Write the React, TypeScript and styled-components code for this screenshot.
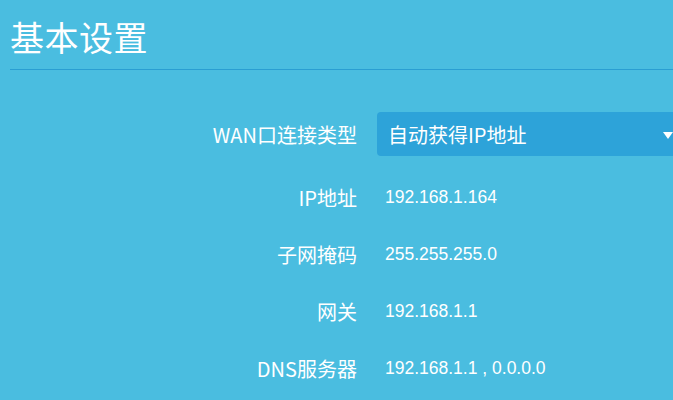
import React from 'react';
import styled, { createGlobalStyle } from 'styled-components';

const GlobalStyle = createGlobalStyle`
  html, body {
    margin: 0;
    padding: 0;
    background: #4abde0;
    overflow: hidden;
  }
  body {
    font-family: "Microsoft YaHei", "Noto Sans CJK SC", "Noto Sans", sans-serif;
    color: #fff;
  }
`;

const Page = styled.div`
  width: 683px;
  height: 400px;
  background: #4abde0;
  padding-left: 10px;
  box-sizing: border-box;
`;

const Header = styled.div`
  height: 70px;
  box-sizing: border-box;
  padding-top: 16px;
  border-bottom: 1px solid #2a9ed2;
`;

const Title = styled.h1`
  margin: 0;
  font-size: 34px;
  line-height: 42px;
  font-weight: normal;
  letter-spacing: 0.5px;
`;

const Form = styled.div`
  padding-top: 35px;
  display: flex;
  flex-direction: column;
`;

const Row = styled.div<{ $first?: boolean }>`
  display: flex;
  align-items: center;
  height: ${p => (p.$first ? '58px' : '57px')};
  margin-bottom: ${p => (p.$first ? '6px' : '0')};
`;

const Label = styled.div`
  width: 367px;
  flex-shrink: 0;
  text-align: right;
  font-size: 20px;
  padding-right: 20px;
  box-sizing: border-box;
  white-space: nowrap;
`;

const Value = styled.div`
  padding-left: 8px;
  font-family: "Liberation Sans", Arial, sans-serif;
  font-size: 17.5px;
  white-space: nowrap;
`;

const Select = styled.div`
  position: relative;
  width: 303px;
  flex-shrink: 0;
  height: 44px;
  background: #2da3d9;
  border-radius: 4px;
  display: flex;
  align-items: center;
  padding-left: 11px;
  box-sizing: border-box;
  font-size: 20px;
`;

const Arrow = styled.span`
  position: absolute;
  right: 7px;
  top: 20px;
  width: 0;
  height: 0;
  border-left: 5px solid transparent;
  border-right: 5px solid transparent;
  border-top: 7px solid #fff;
`;

const rows = [
  { label: 'IP地址', value: '192.168.1.164' },
  { label: '子网掩码', value: '255.255.255.0' },
  { label: '网关', value: '192.168.1.1' },
  { label: 'DNS服务器', value: '192.168.1.1 , 0.0.0.0' },
];

export default function App() {
  return (
    <Page>
      <GlobalStyle />
      <Header>
        <Title>基本设置</Title>
      </Header>
      <Form>
        <Row $first>
          <Label>WAN口连接类型</Label>
          <Select>
            自动获得IP地址
            <Arrow />
          </Select>
        </Row>
        {rows.map(r => (
          <Row key={r.label}>
            <Label>{r.label}</Label>
            <Value>{r.value}</Value>
          </Row>
        ))}
      </Form>
    </Page>
  );
}
